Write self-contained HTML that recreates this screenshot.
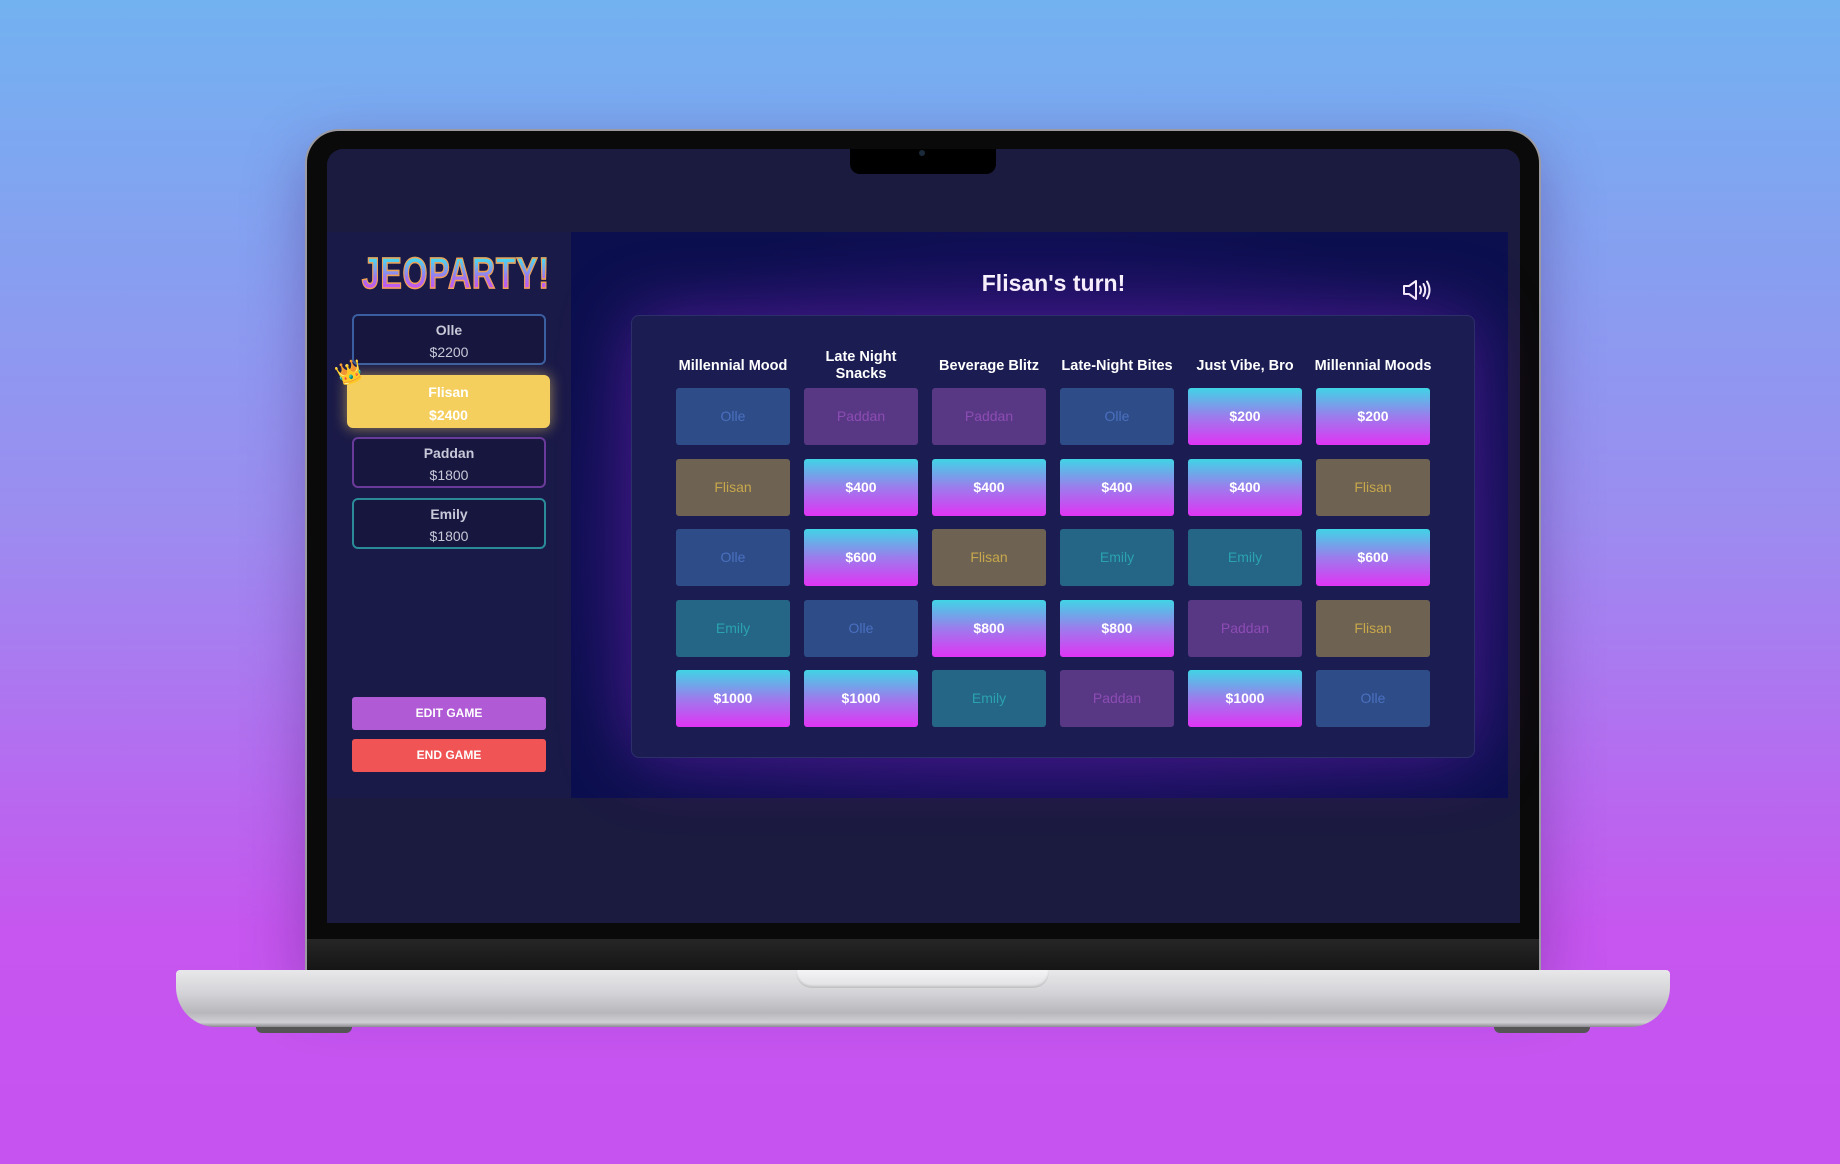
<!DOCTYPE html>
<html><head><meta charset="utf-8">
<style>
*{margin:0;padding:0;box-sizing:border-box}
html,body{width:1840px;height:1164px;overflow:hidden}
body{background:linear-gradient(180deg,#72b2f1 0%,#9c8cf0 45%,#c656ef 80%,#c652f0 100%);font-family:"Liberation Sans",sans-serif;position:relative}
.abs{position:absolute}
.lid{left:305px;top:129px;width:1236px;height:843px;background:#0a0a0a;border-radius:34px 34px 0 0;border:2px solid #9a9aa0;border-bottom:none;box-shadow:0 20px 60px rgba(60,20,100,.35)}
.screen{left:327px;top:149px;width:1193px;height:774px;background:#1b1a3f;border-radius:16px 16px 0 0;overflow:hidden}
.notch{left:850px;top:149px;width:146px;height:25px;background:#000;border-radius:0 0 10px 10px}
.cam{left:919px;top:150px;width:6px;height:6px;border-radius:50%;background:#1a2a3a}
.chin{left:307px;top:939px;width:1232px;height:33px;background:linear-gradient(#262626,#141414)}
.base{left:176px;top:970px;width:1494px;height:57px;background:linear-gradient(180deg,#e8e8ea 0%,#d4d4d8 40%,#b8b8bc 75%,#d0d0d4 92%,#8a8a90 100%);border-radius:4px 4px 40px 40px}
.bnotch{left:796px;top:970px;width:253px;height:18px;background:linear-gradient(#f4f4f6,#e0e0e2);border-radius:0 0 16px 16px;box-shadow:inset 0 -2px 2px rgba(0,0,0,.15)}
.foot{top:1027px;width:96px;height:6px;background:#555;border-radius:0 0 8px 8px}
.sidebar{left:327px;top:232px;width:244px;height:566px;background:#1a1a48}
.main{left:571px;top:232px;width:937px;height:566px;background:radial-gradient(ellipse at 50% 55%,#3a1670 0%,#1a1060 45%,#0b0f4e 80%);overflow:hidden}
.logowrap{left:327px;top:249px;width:244px;text-align:center}
.logo{display:inline-block;font-size:44px;font-weight:bold;line-height:50px;letter-spacing:1px;font-family:"Liberation Sans",sans-serif;background:linear-gradient(180deg,#3fe6f0 15%,#9a7af0 55%,#e040f0 90%);-webkit-background-clip:text;background-clip:text;color:transparent;-webkit-text-stroke:1.5px #f0a050;transform:scaleX(0.73)}
.card{left:352px;width:194px;height:51px;border:2px solid;border-radius:6px;text-align:center;color:#c8c8d8;background:#16163f}
.card b{display:block;font-size:14px;margin-top:6px}
.card span{display:block;font-size:14px;margin-top:6px}
.btn{left:352px;width:194px;height:33px;border-radius:3px;color:#fff;font-weight:bold;font-size:12px;text-align:center;line-height:33px}
.title{left:585px;width:937px;top:270px;text-align:center;color:#fff;font-size:23px;font-weight:bold}
.panel{left:631px;top:315px;width:844px;height:443px;background:#1b1d52;border:1.5px solid #2c2f6a;border-radius:8px;box-shadow:0 0 70px rgba(150,40,220,.45)}
.hd{width:128px;text-align:center;color:#fff;font-weight:bold;font-size:14.5px;line-height:17px}
.c{width:114px;height:57px;border-radius:3px;text-align:center;line-height:57px;font-size:14px}
.g{background:linear-gradient(180deg,#40d4e6 0%,#9c7cec 50%,#e034f4 100%);color:#fff;font-weight:bold}
.o{background:#2e4c88;color:#4a70c0}
.p{background:#583884;color:#8c4cb4}
.f{background:#6e6252;color:#c8a84c}
.e{background:#256686;color:#2aa2b0}
</style></head><body>
<div class="abs lid"></div>
<div class="abs screen"></div>
<div class="abs notch"></div>
<div class="abs cam"></div>
<div class="abs chin"></div>
<div class="abs base"></div>
<div class="abs bnotch"></div>
<div class="abs foot" style="left:256px"></div>
<div class="abs foot" style="left:1494px"></div>

<div class="abs sidebar"></div>
<div class="abs main"></div>
<div class="abs logowrap"><span class="logo">JEOPARTY!</span></div>

<div class="abs card" style="top:314px;border-color:#3a5ea0"><b>Olle</b><span>$2200</span></div>
<div class="abs card" style="left:347px;top:375px;width:203px;height:53px;background:#f5cf5e;border-color:#f5cf5e;color:#fff;box-shadow:0 0 14px rgba(245,207,94,.6)"><b style="margin-top:7px">Flisan</b><span style="font-weight:bold;margin-top:7px">$2400</span></div>
<div class="abs" style="left:336px;top:360px;font-size:22px;transform:rotate(-20deg)">👑</div>
<div class="abs card" style="top:437px;border-color:#6a3a9a"><b>Paddan</b><span>$1800</span></div>
<div class="abs card" style="top:498px;border-color:#2a8a98"><b>Emily</b><span>$1800</span></div>

<div class="abs btn" style="top:697px;background:#b05ad6">EDIT GAME</div>
<div class="abs btn" style="top:739px;background:#f05454">END GAME</div>

<div class="abs title">Flisan's turn!</div>
<svg class="abs" style="left:1402px;top:279px" width="30" height="22" viewBox="0 0 30 22" fill="none" stroke="#fff" stroke-width="2" stroke-linejoin="round" stroke-linecap="round">
<path d="M2 7h5l7-5v18l-7-5H2z"/>
<path d="M18 7.5q2 3.5 0 7"/>
<path d="M21.5 5q3.5 6 0 12"/>
<path d="M25 2.5q5 8.5 0 17"/>
</svg>

<div class="abs panel"></div>

<div class="abs hd" style="left:669px;top:358px">Millennial Mood</div>
<div class="abs hd" style="left:797px;top:349px">Late Night<br>Snacks</div>
<div class="abs hd" style="left:925px;top:358px">Beverage Blitz</div>
<div class="abs hd" style="left:1053px;top:358px">Late-Night Bites</div>
<div class="abs hd" style="left:1181px;top:358px">Just Vibe, Bro</div>
<div class="abs hd" style="left:1309px;top:358px">Millennial Moods</div>

<div class="abs c o" style="left:676px;top:388px">Olle</div>
<div class="abs c p" style="left:804px;top:388px">Paddan</div>
<div class="abs c p" style="left:932px;top:388px">Paddan</div>
<div class="abs c o" style="left:1060px;top:388px">Olle</div>
<div class="abs c g" style="left:1188px;top:388px">$200</div>
<div class="abs c g" style="left:1316px;top:388px">$200</div>

<div class="abs c f" style="left:676px;top:459px">Flisan</div>
<div class="abs c g" style="left:804px;top:459px">$400</div>
<div class="abs c g" style="left:932px;top:459px">$400</div>
<div class="abs c g" style="left:1060px;top:459px">$400</div>
<div class="abs c g" style="left:1188px;top:459px">$400</div>
<div class="abs c f" style="left:1316px;top:459px">Flisan</div>

<div class="abs c o" style="left:676px;top:529px">Olle</div>
<div class="abs c g" style="left:804px;top:529px">$600</div>
<div class="abs c f" style="left:932px;top:529px">Flisan</div>
<div class="abs c e" style="left:1060px;top:529px">Emily</div>
<div class="abs c e" style="left:1188px;top:529px">Emily</div>
<div class="abs c g" style="left:1316px;top:529px">$600</div>

<div class="abs c e" style="left:676px;top:600px">Emily</div>
<div class="abs c o" style="left:804px;top:600px">Olle</div>
<div class="abs c g" style="left:932px;top:600px">$800</div>
<div class="abs c g" style="left:1060px;top:600px">$800</div>
<div class="abs c p" style="left:1188px;top:600px">Paddan</div>
<div class="abs c f" style="left:1316px;top:600px">Flisan</div>

<div class="abs c g" style="left:676px;top:670px">$1000</div>
<div class="abs c g" style="left:804px;top:670px">$1000</div>
<div class="abs c e" style="left:932px;top:670px">Emily</div>
<div class="abs c p" style="left:1060px;top:670px">Paddan</div>
<div class="abs c g" style="left:1188px;top:670px">$1000</div>
<div class="abs c o" style="left:1316px;top:670px">Olle</div>
</body></html>
